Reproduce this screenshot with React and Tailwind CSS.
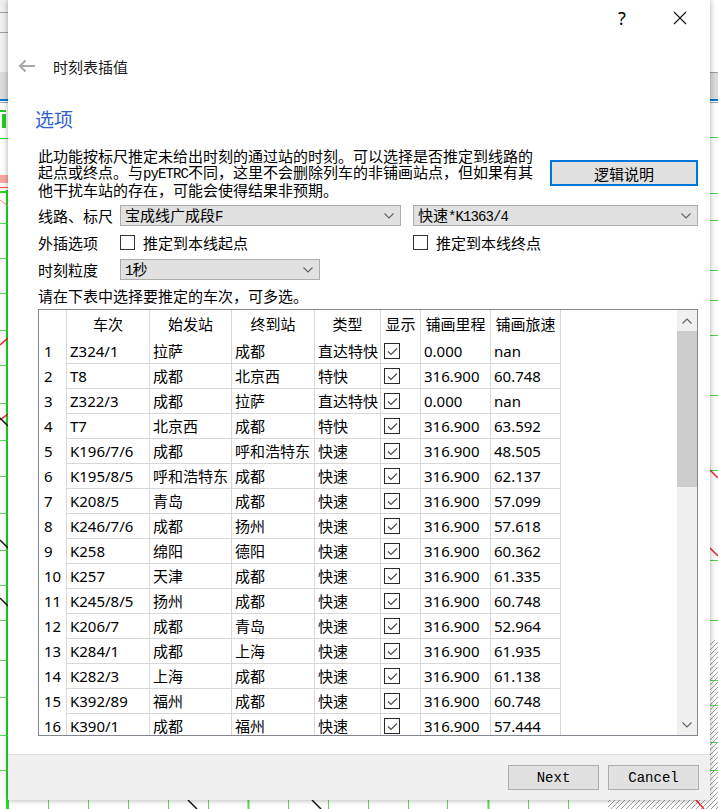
import React from 'react';

const rows = [
  ['Z324/1', '拉萨', '成都', '直达特快', '0.000', 'nan'],
  ['T8', '成都', '北京西', '特快', '316.900', '60.748'],
  ['Z322/3', '成都', '拉萨', '直达特快', '0.000', 'nan'],
  ['T7', '北京西', '成都', '特快', '316.900', '63.592'],
  ['K196/7/6', '成都', '呼和浩特东', '快速', '316.900', '48.505'],
  ['K195/8/5', '呼和浩特东', '成都', '快速', '316.900', '62.137'],
  ['K208/5', '青岛', '成都', '快速', '316.900', '57.099'],
  ['K246/7/6', '成都', '扬州', '快速', '316.900', '57.618'],
  ['K258', '绵阳', '德阳', '快速', '316.900', '60.362'],
  ['K257', '天津', '成都', '快速', '316.900', '61.335'],
  ['K245/8/5', '扬州', '成都', '快速', '316.900', '60.748'],
  ['K206/7', '成都', '青岛', '快速', '316.900', '52.964'],
  ['K284/1', '成都', '上海', '快速', '316.900', '61.935'],
  ['K282/3', '上海', '成都', '快速', '316.900', '61.138'],
  ['K392/89', '福州', '成都', '快速', '316.900', '60.748'],
  ['K390/1', '成都', '福州', '快速', '316.900', '57.444'],
];

const headers = ['车次', '始发站', '终到站', '类型', '显示', '铺画里程', '铺画旅速'];
const widths = ['w-[83px]', 'w-[82px]', 'w-[83px]', 'w-[66px]', 'w-[40px]', 'w-[70px]', 'w-[70px]'];

// half-width latin inside the SimSun-looking text
const Mono = ({ children }) => (
  <span className="font-['Liberation_Mono',monospace] text-[14px] tracking-[-0.9px]">{children}</span>
);

const Chevron = ({ up = false }) => (
  <svg width="10" height="6" viewBox="0 0 10 6">
    <path d={up ? 'M0.5 5.5 L5 1 L9.5 5.5' : 'M0.5 0.5 L5 5 L9.5 0.5'} fill="none" stroke="#606060" strokeWidth="1.1" />
  </svg>
);

const Combo = ({ width, children }) => (
  <div className={`flex h-[21px] items-center justify-between border border-[#adadad] bg-[#e1e1e1] pl-[4px] pr-[6px] ${width}`}>
    <span className="text-[15px] leading-none">{children}</span>
    <Chevron />
  </div>
);

const Check = ({ label }) => (
  <div className="flex items-center gap-[8px]">
    <span className="h-[15px] w-[15px] border border-[#333333] bg-white" />
    <span className="text-[15px] leading-none">{label}</span>
  </div>
);

const TickBox = () => (
  <span className="flex h-[16px] w-[16px] items-center justify-center border border-[#2a2a2a] bg-white">
    <svg width="11" height="9" viewBox="0 0 11 9">
      <path d="M1 4.5 L4 7.5 L10 1.5" fill="none" stroke="#4a4a4a" strokeWidth="1.2" />
    </svg>
  </span>
);

const Backdrop = () => {
  const leftTicks = [223, 258, 293, 330, 365, 403, 440, 476, 513, 550, 585, 620, 660, 697, 735, 770];
  const rightTicks = [137, 193, 220, 270, 300, 335, 395, 470, 560, 620, 680, 705, 742, 770];
  const bottomTicks = [48, 88, 128, 168, 208, 248, 288, 328, 368, 408, 447, 488, 528, 568];
  return (
    <svg className="absolute inset-0" width="718" height="809">
      <defs>
        <pattern id="hatch" width="5" height="5" patternUnits="userSpaceOnUse">
          <path d="M0 5 L5 0" stroke="#8a8a8a" strokeWidth="0.8" />
        </pattern>
      </defs>
      <rect width="718" height="809" fill="#ffffff" />
      <rect x="0" y="0" width="8" height="100" fill="#f0f0f0" />
      <line x1="0" y1="12.5" x2="8" y2="12.5" stroke="#a0a0a0" />
      <line x1="0" y1="32.5" x2="8" y2="32.5" stroke="#a0a0a0" />
      <line x1="0" y1="72.5" x2="8" y2="72.5" stroke="#a0a0a0" />
      <rect x="0" y="72" width="8" height="27" fill="#dcdcdc" />
      <rect x="0" y="99" width="8" height="2" fill="#0078d7" />
      <line x1="0" y1="102.5" x2="8" y2="102.5" stroke="#a0a0a0" />
      <rect x="0" y="110" width="6" height="2" fill="#22cc22" />
      <rect x="2" y="114" width="4" height="14" fill="#22cc22" />
      <line x1="0" y1="138.5" x2="8" y2="138.5" stroke="#22dd22" />
      <rect x="0" y="175" width="8" height="8" fill="#ff6b6b" opacity="0.6" />
      <line x1="0" y1="187.5" x2="8" y2="187.5" stroke="#ff5555" />
      <rect x="6" y="190" width="2" height="619" fill="#22dd22" />
      <line x1="0" y1="192" x2="8" y2="192" stroke="#22dd22" strokeWidth="2" />
      {leftTicks.map((y) => (
        <line key={y} x1="0" y1={y + 0.5} x2="8" y2={y + 0.5} stroke="#55dd55" />
      ))}
      <line x1="0" y1="200" x2="8" y2="206" stroke="#ff8888" />
      <line x1="0" y1="345" x2="8" y2="338" stroke="#ee2222" strokeWidth="1.5" />
      <line x1="0" y1="420" x2="8" y2="414" stroke="#ee2222" strokeWidth="1.5" />
      <line x1="0" y1="418" x2="8" y2="426" stroke="#111111" strokeWidth="1.5" />
      <line x1="0" y1="540" x2="8" y2="548" stroke="#111111" strokeWidth="1.5" />
      <line x1="0" y1="598" x2="8" y2="606" stroke="#111111" strokeWidth="1.5" />

      <rect x="710" y="0" width="8" height="100" fill="#ffffff" />
      <rect x="710" y="72" width="8" height="27" fill="#dcdcdc" />
      <line x1="710" y1="72.5" x2="718" y2="72.5" stroke="#a0a0a0" />
      <rect x="710" y="99" width="8" height="2" fill="#0078d7" />
      <line x1="710" y1="102.5" x2="718" y2="102.5" stroke="#a0a0a0" />
      {rightTicks.map((y) => (
        <line key={y} x1="710" y1={y + 0.5} x2="718" y2={y + 0.5} stroke="#44dd44" />
      ))}
      <line x1="710" y1="470" x2="718" y2="478" stroke="#ee2222" strokeWidth="1.5" />
      <line x1="710" y1="548" x2="718" y2="556" stroke="#ee2222" strokeWidth="1.5" />
      <rect x="710" y="640" width="8" height="169" fill="url(#hatch)" />

      <rect x="608" y="800" width="110" height="9" fill="url(#hatch)" />
      <rect x="7" y="800" width="2" height="9" fill="#22dd22" />
      {bottomTicks.map((x) => (
        <line key={x} x1={x + 0.5} y1="800" x2={x + 0.5} y2="809" stroke="#55dd55" strokeWidth={x === 248 || x === 488 ? 2 : 1} />
      ))}
      <line x1="188" y1="800" x2="197" y2="809" stroke="#111111" strokeWidth="1.5" />
      <line x1="312" y1="800" x2="321" y2="809" stroke="#111111" strokeWidth="1.5" />
      <line x1="696" y1="800" x2="704" y2="809" stroke="#ee2222" strokeWidth="1.5" />
    </svg>
  );
};

const App = () => {
  return (
    <div className="relative h-[809px] w-[718px] overflow-hidden bg-white font-['Noto_Sans_CJK_SC',sans-serif] text-black">
      <Backdrop />

      {/* wizard window */}
      <div className="absolute left-[8px] top-0 flex h-[800px] w-[702px] flex-col bg-white shadow-[0_0_6px_rgba(0,0,0,0.35)]">
        {/* title bar */}
        <div className="flex h-[36px] items-center justify-end gap-[42px] pr-[22px]">
          <span className="w-[16px] text-center font-['Noto_Sans',sans-serif] text-[18px] leading-none">?</span>
          <span className="flex w-[16px] justify-center">
            <svg width="14" height="14" viewBox="0 0 14 14">
              <path d="M1 1 L13 13 M13 1 L1 13" stroke="#111111" strokeWidth="1.1" />
            </svg>
          </span>
        </div>

        {/* back + page title */}
        <div className="mt-[15px] flex h-[30px] items-center pl-[10px]">
          <svg width="18" height="14" viewBox="0 0 18 14">
            <path d="M17 7 H2 M7.5 1.5 L2 7 L7.5 12.5" fill="none" stroke="#a9a9a9" strokeWidth="2" />
          </svg>
          <span className="ml-[17px] text-[15px] leading-none text-[#1a1a1a]">时刻表插值</span>
        </div>

        <div className="mt-[23px] flex h-[28px] items-center pl-[27px] text-[19px] leading-none text-[#2f63d2]">选项</div>

        <div className="flex flex-col pl-[30px] pr-[12px]">
          <div className="mt-[17px] flex h-[48px] items-center justify-between">
            <p className="whitespace-nowrap text-[15px] leading-[16px]">
              此功能按标尺推定未给出时刻的通过站的时刻。可以选择是否推定到线路的
              <br />
              起点或终点。与<Mono>pyETRC</Mono>不同，这里不会删除列车的非铺画站点，但如果有其
              <br />
              他干扰车站的存在，可能会使得结果非预期。
            </p>
            <button className="flex h-[26px] w-[148px] items-center justify-center border-2 border-[#0078d7] bg-[#e1e1e1] text-[15px] leading-none">
              逻辑说明
            </button>
          </div>

          <div className="mt-[8px] flex flex-col gap-[6px]">
            <div className="flex h-[21px] items-center">
              <span className="w-[82px] text-[15px] leading-none">线路、标尺</span>
              <Combo width="w-[281px]">
                宝成线广成段<Mono>F</Mono>
              </Combo>
              <div className="ml-[12px] flex-1">
                <Combo width="w-full">
                  快速<Mono>*K1363/4</Mono>
                </Combo>
              </div>
            </div>
            <div className="flex h-[21px] items-center">
              <span className="w-[82px] text-[15px] leading-none">外插选项</span>
              <div className="w-[293px]">
                <Check label="推定到本线起点" />
              </div>
              <Check label="推定到本线终点" />
            </div>
            <div className="flex h-[21px] items-center">
              <span className="w-[82px] text-[15px] leading-none">时刻粒度</span>
              <Combo width="w-[200px]">
                <Mono>1</Mono>秒
              </Combo>
            </div>
            <div className="flex h-[18px] items-center text-[15px] leading-none">请在下表中选择要推定的车次，可多选。</div>
          </div>

          {/* train table */}
          <div className="mt-[5px] flex h-[427px] border border-[#828790] bg-white font-['Noto_Sans','Noto_Sans_CJK_SC',sans-serif] text-[15px] leading-none">
            <div className="flex-1 overflow-hidden">
              <div className="flex h-[29px]">
                <div className="w-[28px] border-r border-[#d8d8d8]" />
                {headers.map((h, i) => (
                  <div key={h} className={`flex items-center justify-center border-r border-[#d8d8d8] ${widths[i]}`}>
                    {h}
                  </div>
                ))}
              </div>
              {rows.map((r, idx) => (
                <div key={idx} className="flex h-[25px]">
                  <div className="flex w-[28px] items-center border-r border-[#d8d8d8] pl-[5px]">{idx + 1}</div>
                  {[0, 1, 2, 3].map((c) => (
                    <div key={c} className={`flex items-center whitespace-nowrap border-b border-r border-[#d8d8d8] pl-[3px] ${widths[c]}`}>
                      {r[c]}
                    </div>
                  ))}
                  <div className="flex w-[40px] items-center border-b border-r border-[#d8d8d8] pl-[3px]">
                    <TickBox />
                  </div>
                  <div className="flex w-[70px] items-center border-b border-r border-[#d8d8d8] pl-[3px]">{r[4]}</div>
                  <div className="flex w-[70px] items-center border-b border-r border-[#d8d8d8] pl-[3px]">{r[5]}</div>
                </div>
              ))}
            </div>

            {/* vertical scrollbar */}
            <div className="flex w-[20px] flex-col bg-[#f0f0f0]">
              <div className="flex h-[21px] items-center justify-center">
                <Chevron up />
              </div>
              <div className="h-[156px] bg-[#cdcdcd]" />
              <div className="flex-1" />
              <div className="flex h-[21px] items-center justify-center">
                <Chevron />
              </div>
            </div>
          </div>
        </div>

        <div className="flex-1" />

        {/* button bar */}
        <div className="flex h-[46px] items-center justify-end gap-[9px] border-t border-[#dfdfdf] bg-[#f0f0f0] pr-[11px]">
          <button className="flex h-[25px] w-[91px] items-center justify-center border border-[#adadad] bg-[#e1e1e1] font-['Liberation_Mono',monospace] text-[14px] leading-none">
            Next
          </button>
          <button className="flex h-[25px] w-[91px] items-center justify-center border border-[#adadad] bg-[#e1e1e1] font-['Liberation_Mono',monospace] text-[14px] leading-none">
            Cancel
          </button>
        </div>
      </div>
    </div>
  );
};

export default App;
